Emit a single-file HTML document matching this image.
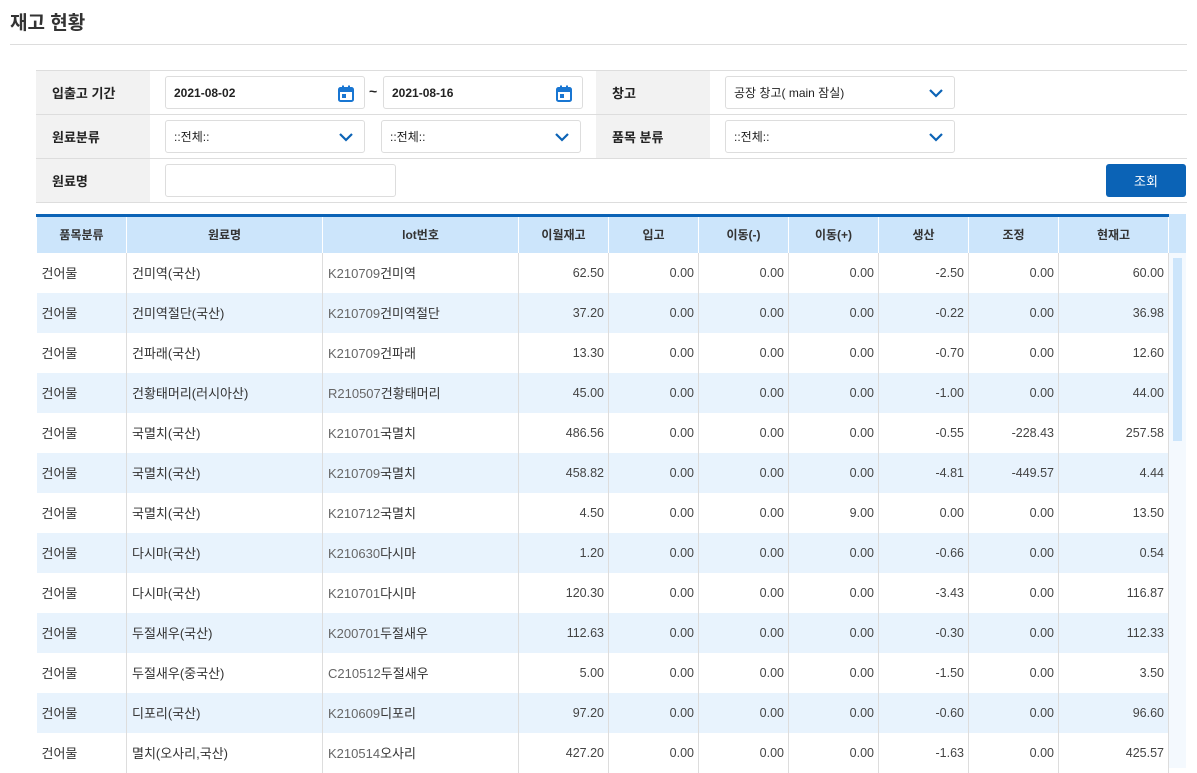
<!DOCTYPE html>
<html><head><meta charset="utf-8"><style>
*{box-sizing:border-box;margin:0;padding:0}
body{width:1197px;height:768px;overflow:hidden;background:#fff;font-family:"Liberation Sans","Noto Sans CJK KR",sans-serif;color:#222;position:relative}
.a{position:absolute}
h1{position:absolute;left:10px;top:8px;font-size:19px;font-weight:bold;color:#333}
.lbl{position:absolute;background:#f2f2f2;font-size:13px;font-weight:bold;padding-left:16px;display:flex;align-items:center}
.hl{position:absolute;left:36px;width:1151px;height:1px;background:#ddd}
.box{position:absolute;height:33px;border:1px solid #ddd;border-radius:3px;background:#fff;font-size:12px;display:flex;align-items:center;padding-left:8px}
.box svg{position:absolute;right:10px;top:8px}
.cal{position:absolute;right:8px;top:7px;width:16px;height:17px}
table{position:absolute;left:36px;top:214px;border-collapse:collapse;table-layout:fixed;font-size:13px}
th{height:37px;background:#cce5fb;font-size:12px;font-weight:bold;color:#333;border-left:1px solid #fff;border-right:1px solid #fff;border-top:3px solid #0b63b6}
td{height:40px;border-left:1px solid #ddd;border-right:1px solid #ddd;padding:0 4px 0 5px;color:#333}
td:first-child{border-left:none}
tr:nth-child(odd) td{background:#e8f3fd}
td.n{text-align:right;color:#444;font-size:12.5px;padding-right:4px}
td.l span{color:#666}
</style></head><body>
<h1>재고 현황</h1>
<div class="a" style="left:10px;top:44px;width:1177px;height:1px;background:#ddd"></div>
<div class="hl" style="top:70px"></div>
<div class="hl" style="top:114px"></div>
<div class="hl" style="top:158px"></div>
<div class="hl" style="top:202px"></div>
<div class="lbl" style="left:36px;top:71px;width:114px;height:43px">입출고 기간</div>
<div class="lbl" style="left:36px;top:115px;width:114px;height:43px">원료분류</div>
<div class="lbl" style="left:36px;top:159px;width:114px;height:43px">원료명</div>
<div class="lbl" style="left:596px;top:71px;width:114px;height:43px">창고</div>
<div class="lbl" style="left:596px;top:115px;width:114px;height:43px">품목 분류</div>

<div class="box" style="left:165px;top:76px;width:200px;font-weight:bold">2021-08-02
<svg class="cal" viewBox="0 0 16 17"><rect x="1" y="3" width="14" height="13" rx="1.5" fill="none" stroke="#1976d2" stroke-width="2"/><rect x="1" y="3" width="14" height="4" fill="#1976d2"/><rect x="4" y="0.5" width="2" height="4" fill="#1976d2"/><rect x="10" y="0.5" width="2" height="4" fill="#1976d2"/><rect x="4" y="9" width="4" height="4" fill="#1976d2"/></svg></div>
<div class="a" style="left:369px;top:83px;font-size:14px;font-weight:bold">~</div>
<div class="box" style="left:383px;top:76px;width:200px;font-weight:bold">2021-08-16
<svg class="cal" viewBox="0 0 16 17"><rect x="1" y="3" width="14" height="13" rx="1.5" fill="none" stroke="#1976d2" stroke-width="2"/><rect x="1" y="3" width="14" height="4" fill="#1976d2"/><rect x="4" y="0.5" width="2" height="4" fill="#1976d2"/><rect x="10" y="0.5" width="2" height="4" fill="#1976d2"/><rect x="4" y="9" width="4" height="4" fill="#1976d2"/></svg></div>

<div class="box" style="left:165px;top:120px;width:200px">::전체::<svg width="16" height="16" viewBox="0 0 16 16"><path d="M2 5l6 6 6-6" fill="none" stroke="#0b63b6" stroke-width="2.2"/></svg></div>
<div class="box" style="left:381px;top:120px;width:200px">::전체::<svg width="16" height="16" viewBox="0 0 16 16"><path d="M2 5l6 6 6-6" fill="none" stroke="#0b63b6" stroke-width="2.2"/></svg></div>
<div class="box" style="left:165px;top:164px;width:231px"></div>
<div class="box" style="left:725px;top:76px;width:230px">공장 창고( main 잠실)<svg width="16" height="16" viewBox="0 0 16 16"><path d="M2 5l6 6 6-6" fill="none" stroke="#0b63b6" stroke-width="2.2"/></svg></div>
<div class="box" style="left:725px;top:120px;width:230px">::전체::<svg width="16" height="16" viewBox="0 0 16 16"><path d="M2 5l6 6 6-6" fill="none" stroke="#0b63b6" stroke-width="2.2"/></svg></div>
<div class="a" style="left:1106px;top:164px;width:80px;height:33px;background:#0b63b6;border-radius:3px;color:#fff;font-size:13px;display:flex;align-items:center;justify-content:center">조회</div>

<div class="a" style="left:1168px;top:214px;width:18px;height:554px;background:#f4f9fe"></div>
<div class="a" style="left:1168px;top:214px;width:18px;height:39px;background:#cce5fb"></div>
<div class="a" style="left:1173px;top:258px;width:9px;height:183px;background:#cce5fb"></div>

<table>
<colgroup><col style="width:90px"><col style="width:196px"><col style="width:196px"><col style="width:90px"><col style="width:90px"><col style="width:90px"><col style="width:90px"><col style="width:90px"><col style="width:90px"><col style="width:110px"></colgroup>
<tr><th>품목분류</th><th>원료명</th><th>lot번호</th><th>이월재고</th><th>입고</th><th>이동(-)</th><th>이동(+)</th><th>생산</th><th>조정</th><th>현재고</th></tr>
<tr><td>건어물</td><td>건미역(국산)</td><td class="l"><span>K210709</span>건미역</td><td class="n">62.50</td><td class="n">0.00</td><td class="n">0.00</td><td class="n">0.00</td><td class="n">-2.50</td><td class="n">0.00</td><td class="n">60.00</td></tr>
<tr><td>건어물</td><td>건미역절단(국산)</td><td class="l"><span>K210709</span>건미역절단</td><td class="n">37.20</td><td class="n">0.00</td><td class="n">0.00</td><td class="n">0.00</td><td class="n">-0.22</td><td class="n">0.00</td><td class="n">36.98</td></tr>
<tr><td>건어물</td><td>건파래(국산)</td><td class="l"><span>K210709</span>건파래</td><td class="n">13.30</td><td class="n">0.00</td><td class="n">0.00</td><td class="n">0.00</td><td class="n">-0.70</td><td class="n">0.00</td><td class="n">12.60</td></tr>
<tr><td>건어물</td><td>건황태머리(러시아산)</td><td class="l"><span>R210507</span>건황태머리</td><td class="n">45.00</td><td class="n">0.00</td><td class="n">0.00</td><td class="n">0.00</td><td class="n">-1.00</td><td class="n">0.00</td><td class="n">44.00</td></tr>
<tr><td>건어물</td><td>국멸치(국산)</td><td class="l"><span>K210701</span>국멸치</td><td class="n">486.56</td><td class="n">0.00</td><td class="n">0.00</td><td class="n">0.00</td><td class="n">-0.55</td><td class="n">-228.43</td><td class="n">257.58</td></tr>
<tr><td>건어물</td><td>국멸치(국산)</td><td class="l"><span>K210709</span>국멸치</td><td class="n">458.82</td><td class="n">0.00</td><td class="n">0.00</td><td class="n">0.00</td><td class="n">-4.81</td><td class="n">-449.57</td><td class="n">4.44</td></tr>
<tr><td>건어물</td><td>국멸치(국산)</td><td class="l"><span>K210712</span>국멸치</td><td class="n">4.50</td><td class="n">0.00</td><td class="n">0.00</td><td class="n">9.00</td><td class="n">0.00</td><td class="n">0.00</td><td class="n">13.50</td></tr>
<tr><td>건어물</td><td>다시마(국산)</td><td class="l"><span>K210630</span>다시마</td><td class="n">1.20</td><td class="n">0.00</td><td class="n">0.00</td><td class="n">0.00</td><td class="n">-0.66</td><td class="n">0.00</td><td class="n">0.54</td></tr>
<tr><td>건어물</td><td>다시마(국산)</td><td class="l"><span>K210701</span>다시마</td><td class="n">120.30</td><td class="n">0.00</td><td class="n">0.00</td><td class="n">0.00</td><td class="n">-3.43</td><td class="n">0.00</td><td class="n">116.87</td></tr>
<tr><td>건어물</td><td>두절새우(국산)</td><td class="l"><span>K200701</span>두절새우</td><td class="n">112.63</td><td class="n">0.00</td><td class="n">0.00</td><td class="n">0.00</td><td class="n">-0.30</td><td class="n">0.00</td><td class="n">112.33</td></tr>
<tr><td>건어물</td><td>두절새우(중국산)</td><td class="l"><span>C210512</span>두절새우</td><td class="n">5.00</td><td class="n">0.00</td><td class="n">0.00</td><td class="n">0.00</td><td class="n">-1.50</td><td class="n">0.00</td><td class="n">3.50</td></tr>
<tr><td>건어물</td><td>디포리(국산)</td><td class="l"><span>K210609</span>디포리</td><td class="n">97.20</td><td class="n">0.00</td><td class="n">0.00</td><td class="n">0.00</td><td class="n">-0.60</td><td class="n">0.00</td><td class="n">96.60</td></tr>
<tr><td>건어물</td><td>멸치(오사리,국산)</td><td class="l"><span>K210514</span>오사리</td><td class="n">427.20</td><td class="n">0.00</td><td class="n">0.00</td><td class="n">0.00</td><td class="n">-1.63</td><td class="n">0.00</td><td class="n">425.57</td></tr>
</table>
</body></html>
